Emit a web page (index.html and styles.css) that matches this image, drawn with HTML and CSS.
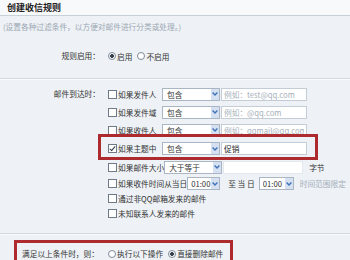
FILE: index.html
```html
<!DOCTYPE html>
<html lang="zh-CN">
<head>
    <meta charset="UTF-8">
    <title>创建收信规则</title>
    <link rel="stylesheet" href="styles.css">
</head>
<body>
    <div class="panel">
        <div class="head"><h2>创建收信规则</h2></div>
        <p class="tip">(设置各种过滤条件，以方便对邮件进行分类或处理。)</p>

        <div class="field enable">
            <div class="label">规则启用：</div>
            <div class="ctrl">
                <label class="opt"><input type="radio" name="enable" checked>启用</label>
                <label class="opt"><input type="radio" name="enable">不启用</label>
            </div>
        </div>

        <div class="sect conds-sect">
            <div class="field">
                <div class="label">邮件到达时：</div>
                <div class="conds">
                    <div class="cond">
                        <label class="chk"><input type="checkbox">如果发件人</label>
                        <span class="sel"><select><option>包含</option></select><i class="arrow"><svg width="6" height="4" viewBox="0 0 6 4"><path d="M0.6 0.6 L3 3 L5.4 0.6" fill="none" stroke="#3f72b8" stroke-width="1.4"/></svg></i></span>
                        <input type="text" class="txt" placeholder="例如：test@qq.com">
                    </div>
                    <div class="cond">
                        <label class="chk"><input type="checkbox">如果发件域</label>
                        <span class="sel"><select><option>包含</option></select><i class="arrow"><svg width="6" height="4" viewBox="0 0 6 4"><path d="M0.6 0.6 L3 3 L5.4 0.6" fill="none" stroke="#3f72b8" stroke-width="1.4"/></svg></i></span>
                        <input type="text" class="txt" placeholder="例如：@qq.com">
                    </div>
                    <div class="cond">
                        <label class="chk"><input type="checkbox">如果收件人</label>
                        <span class="sel"><select><option>包含</option></select><i class="arrow"><svg width="6" height="4" viewBox="0 0 6 4"><path d="M0.6 0.6 L3 3 L5.4 0.6" fill="none" stroke="#3f72b8" stroke-width="1.4"/></svg></i></span>
                        <input type="text" class="txt" placeholder="例如：qqmail@qq.com">
                    </div>
                    <div class="cond subject">
                        <label class="chk"><input type="checkbox" checked>如果主题中</label>
                        <span class="sel"><select><option>包含</option></select><i class="arrow"><svg width="6" height="4" viewBox="0 0 6 4"><path d="M0.6 0.6 L3 3 L5.4 0.6" fill="none" stroke="#3f72b8" stroke-width="1.4"/></svg></i></span>
                        <input type="text" class="txt" value="促销">
                    </div>
                    <div class="cond">
                        <label class="chk"><input type="checkbox">如果邮件大小</label>
                        <span class="sel"><select><option>大于等于</option></select><i class="arrow"><svg width="6" height="4" viewBox="0 0 6 4"><path d="M0.6 0.6 L3 3 L5.4 0.6" fill="none" stroke="#3f72b8" stroke-width="1.4"/></svg></i></span>
                        <input type="text" class="txt size">
                        <span class="unit">字节</span>
                    </div>
                    <div class="cond short">
                        <label class="chk"><input type="checkbox">如果收件时间从当日</label>
                        <span class="sel time"><select><option>01:00</option></select><i class="arrow"><svg width="6" height="4" viewBox="0 0 6 4"><path d="M0.6 0.6 L3 3 L5.4 0.6" fill="none" stroke="#3f72b8" stroke-width="1.4"/></svg></i></span>
                        <span class="to">至 当 日</span>
                        <span class="sel time wide"><select><option>01:00</option></select><i class="arrow"><svg width="6" height="4" viewBox="0 0 6 4"><path d="M0.6 0.6 L3 3 L5.4 0.6" fill="none" stroke="#3f72b8" stroke-width="1.4"/></svg></i></span>
                        <span class="hint">时间范围限定</span>
                    </div>
                    <div class="cond short">
                        <label class="chk"><input type="checkbox">通过非QQ邮箱发来的邮件</label>
                    </div>
                    <div class="cond short">
                        <label class="chk"><input type="checkbox">未知联系人发来的邮件</label>
                    </div>
                </div>
            </div>
        </div>

        <div class="sect">
            <div class="action">
                <span class="action-label">满足以上条件时，则：</span>
                <label class="opt"><input type="radio" name="act">执行以下操作</label>
                <label class="opt"><input type="radio" name="act" checked>直接删除邮件</label>
            </div>
        </div>
    </div>
</body>
</html>
```

FILE: styles.css
```css
* {
    box-sizing: border-box;
}
body {
    margin: 0;
    background-color: #eef2f6;
    font-family: "Noto Sans CJK SC", sans-serif;
    font-size: 7.7px;
    color: #333;
    overflow: hidden;
}
.panel {
    width: 350px;
    white-space: nowrap;
}
.head {
    height: 16px;
    padding-left: 7px;
    background-color: #f8f9fb;
    border-bottom: 1px solid #c8d1da;
}
h2 {
    margin: 0;
    font-size: 9px;
    line-height: 15px;
    font-weight: bold;
    color: #222;
}
.tip {
    margin: 0;
    padding: 5px 0 0 3px;
    line-height: 12px;
    color: #9ba7b3;
}
.field {
    display: flex;
}
.label {
    flex: none;
    width: 100px;
    margin-right: 8px;
    text-align: right;
    line-height: 18px;
}
.enable {
    margin-top: 14px;
}
.ctrl {
    display: flex;
    align-items: center;
    height: 18px;
}
.sect {
    border-top: 1px solid #d2d9e1;
    box-shadow: inset 0 1px #f9fafc;
}
.conds-sect {
    margin-top: 13px;
    padding: 6px 0 12px;
}
.conds {
    flex: 1;
}
.cond {
    display: flex;
    align-items: center;
    height: 18px;
}
.cond.subject {
    position: relative;
    height: 19px;
}
/* red annotation frame */
.cond.subject::after {
    content: '';
    position: absolute;
    left: -10px;
    right: 32px;
    top: -5px;
    bottom: -2px;
    border: 3px solid #ad2a2f;
}
.cond.short {
    height: 15px;
}
.chk, .opt {
    display: flex;
    align-items: center;
}
.chk {
    min-width: 54px;
}
.opt {
    margin-right: 5px;
}
input[type=checkbox], input[type=radio] {
    appearance: none;
    margin: 0 1px 0 0;
    background-color: #fff;
    flex: none;
}
input[type=checkbox] {
    position: relative;
    width: 9px;
    height: 9px;
    border: 1px solid #6f7a86;
}
input[type=checkbox]:checked::after {
    content: '';
    position: absolute;
    left: 2px;
    top: 0;
    width: 2px;
    height: 5px;
    border: solid #2f3b47;
    border-width: 0 1.3px 1.3px 0;
    transform: rotate(40deg);
}
input[type=radio] {
    width: 8px;
    height: 8px;
    border: 1px solid #7f8b97;
    border-radius: 50%;
}
input[type=radio]:checked {
    background: radial-gradient(circle, #37424e 0 1.6px, #fff 2.2px);
}
.sel {
    position: relative;
    display: inline-block;
    width: 58px;
    height: 13px;
    flex: none;
}
.sel select {
    appearance: none;
    width: 100%;
    height: 13px;
    margin: 0;
    padding: 0 0 0 4px;
    border: 1px solid #aab6c3;
    border-radius: 0;
    background-color: #fff;
    font: inherit;
    line-height: 11px;
    color: #333;
}
.sel .arrow {
    position: absolute;
    right: 1px;
    top: 1px;
    width: 8px;
    height: 11px;
    background-color: #d5e1f1;
    display: flex;
    align-items: center;
    justify-content: center;
}
.sel.time {
    width: 33px;
}
.sel.time select {
    padding-left: 3px;
}
.sel.wide {
    width: 35px;
}
.txt {
    width: 86px;
    height: 13px;
    margin: 0 0 0 1px;
    padding: 0 2px;
    border: 1px solid #c4ccd5;
    background-color: #fff;
    font: inherit;
    color: #222;
}
.txt::placeholder {
    color: #a6b0ba;
}
.txt.size {
    width: 80px;
    border-color: #e3e8ee;
}
.unit {
    margin-left: 6px;
}
.to {
    margin: 0 4px 0 8px;
    word-spacing: 0;
}
.hint {
    margin-left: 6px;
    color: #a3adb8;
}
.action {
    display: flex;
    align-items: center;
    width: 219px;
    height: 24px;
    margin: 6px 0 0 14px;
    padding-left: 5px;
    border: 3px solid #ad2a2f;
    border-bottom: none;
}
.action-label {
    width: 86px;
}
```
